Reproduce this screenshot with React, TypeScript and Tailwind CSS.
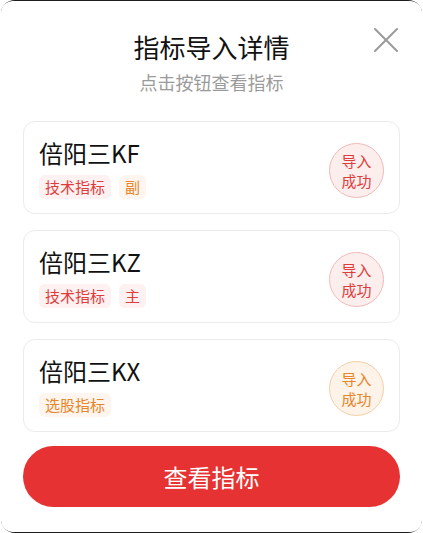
import { X } from "lucide-react";

type Tone = "red" | "orange";

interface Indicator {
  name: string;
  tags: { label: string; tone: Tone }[];
  status: Tone;
}

const indicators: Indicator[] = [
  {
    name: "倍阳三KF",
    tags: [
      { label: "技术指标", tone: "red" },
      { label: "副", tone: "orange" },
    ],
    status: "red",
  },
  {
    name: "倍阳三KZ",
    tags: [
      { label: "技术指标", tone: "red" },
      { label: "主", tone: "red" },
    ],
    status: "red",
  },
  {
    name: "倍阳三KX",
    tags: [{ label: "选股指标", tone: "orange" }],
    status: "orange",
  },
];

const tagTone: Record<Tone, string> = {
  red: "bg-[#fdf1f1] text-[#e03c3c]",
  orange: "bg-[#fef6ee] text-[#e8852a]",
};

const badgeTone: Record<Tone, string> = {
  red: "bg-[#fdeeee] border-[#f1b9b9] text-[#e03c3c]",
  orange: "bg-[#fef3e8] border-[#f4cfa6] text-[#e8852a]",
};

function IndicatorCard({ item }: { item: Indicator }) {
  return (
    <div className="flex h-[93px] items-center justify-between rounded-xl border border-[#ebebeb] bg-white pl-[15px] pr-[15px]">
      <div className="flex flex-col">
        <div className="text-[24px] leading-[32px] text-[#111]">{item.name}</div>
        <div className="mt-[6px] flex gap-2">
          {item.tags.map((tag) => (
            <span
              key={tag.label}
              className={`rounded-md px-[6px] text-[15px] leading-[24px] ${tagTone[tag.tone]}`}
            >
              {tag.label}
            </span>
          ))}
        </div>
      </div>
      <div
        className={`mt-[6px] flex h-[55px] w-[55px] flex-col items-center justify-center rounded-full border text-[15px] leading-[20px] ${badgeTone[item.status]}`}
      >
        <span>导入</span>
        <span>成功</span>
      </div>
    </div>
  );
}

export default function App() {
  return (
    <div
      className="h-[533px] w-[423px] bg-white"
      style={{ fontFamily: '"Noto Sans CJK SC", "Noto Sans", sans-serif' }}
    >
      <div className="mx-[1px] h-full rounded-[14px] bg-[#1c1c1c] py-[1px]">
        <div className="relative flex h-full flex-col rounded-[12px] bg-white px-[22px] pt-[29px]">
          <button className="absolute right-[14px] top-[17px] text-[#9a9a9a]" aria-label="关闭">
            <X size={44} strokeWidth={1.1} />
          </button>
          <h1 className="text-center text-[26px] font-normal leading-[34px] text-[#111]">
            指标导入详情
          </h1>
          <p className="mt-[6px] text-center text-[18px] leading-[24px] text-[#9b9b9b]">
            点击按钮查看指标
          </p>
          <div className="mt-[27px] flex flex-col gap-4">
            {indicators.map((item) => (
              <IndicatorCard key={item.name} item={item} />
            ))}
          </div>
          <button className="mt-[14px] h-[61px] w-full rounded-full bg-[#e63232] text-[24px] text-white">
            查看指标
          </button>
        </div>
      </div>
    </div>
  );
}
